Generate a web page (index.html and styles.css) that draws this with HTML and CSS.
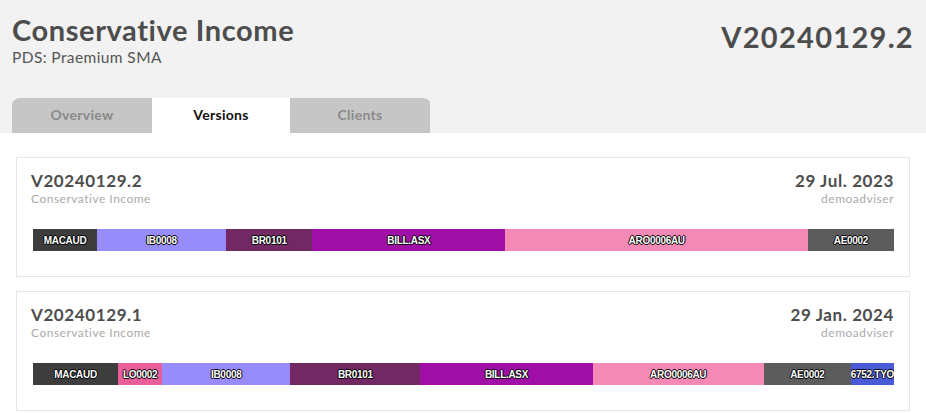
FILE: index.html
```html
<!DOCTYPE html>
<html lang="en">

<head>
    <meta charset="UTF-8">
    <meta name="viewport" content="width=device-width, initial-scale=1.0">
    <title>Conservative Income - Versions</title>
    <link rel="stylesheet" href="styles.css">
</head>

<body>
    <header class="page-head">
        <div class="head-row">
            <div>
                <h1 class="model-name">Conservative Income</h1>
                <p class="model-pds">PDS: Praemium SMA</p>
            </div>
            <div class="head-version">V20240129.2</div>
        </div>

        <nav class="tabs">
            <a class="tab">Overview</a>
            <a class="tab active">Versions</a>
            <a class="tab">Clients</a>
        </nav>
    </header>

    <main class="version-list">
        <div class="version-card">
            <div class="card-head">
                <div>
                    <div class="card-title">V20240129.2</div>
                    <div class="card-sub">Conservative Income</div>
                </div>
                <div class="card-right">
                    <div class="card-title">29 Jul. 2023</div>
                    <div class="card-sub">demoadviser</div>
                </div>
            </div>
            <div class="alloc-bar">
                <div class="seg c-macaud" style="width: 7.44%">MACAUD</div>
                <div class="seg c-ib" style="width: 15%">IB0008</div>
                <div class="seg c-br" style="width: 10%">BR0101</div>
                <div class="seg c-bill" style="width: 22.44%">BILL.ASX</div>
                <div class="seg c-aro" style="width: 35.12%">ARO0006AU</div>
                <div class="seg c-ae" style="width: 10%">AE0002</div>
            </div>
        </div>

        <div class="version-card">
            <div class="card-head">
                <div>
                    <div class="card-title">V20240129.1</div>
                    <div class="card-sub">Conservative Income</div>
                </div>
                <div class="card-right">
                    <div class="card-title">29 Jan. 2024</div>
                    <div class="card-sub">demoadviser</div>
                </div>
            </div>
            <div class="alloc-bar">
                <div class="seg c-macaud" style="width: 9.88%">MACAUD</div>
                <div class="seg c-lo" style="width: 5.12%">LO0002</div>
                <div class="seg c-ib" style="width: 14.88%">IB0008</div>
                <div class="seg c-br" style="width: 15.12%">BR0101</div>
                <div class="seg c-bill" style="width: 20%">BILL.ASX</div>
                <div class="seg c-aro" style="width: 19.88%">ARO0006AU</div>
                <div class="seg c-ae" style="width: 10.12%">AE0002</div>
                <div class="seg c-tyo" style="width: 5%">6752.TYO</div>
            </div>
        </div>
    </main>
</body>

</html>
```

FILE: styles.css
```css
body {
    margin: 0;
    font-family: "Lato", "Open Sans", sans-serif;
    background-color: #fff;
    color: #4d4d4d;
}

.page-head {
    background-color: #f2f2f2;
    padding: 14px 12px 0 12px;
}

.head-row {
    display: flex;
    justify-content: space-between;
    align-items: flex-start;
}

.model-name {
    margin: 0;
    font-size: 29px;
    line-height: 32px;
    font-weight: 700;
    letter-spacing: 0.6px;
    color: #4d4d4d;
}

.model-pds {
    margin: 2px 0 0 0;
    font-size: 15.5px;
    letter-spacing: 0.4px;
    color: #555;
}

.head-version {
    font-size: 29px;
    line-height: 32px;
    font-weight: 700;
    letter-spacing: 1.3px;
    margin-top: 7px;
    color: #4d4d4d;
}

.tabs {
    display: flex;
    margin-top: 32px;
    width: 419px;
    border-radius: 8px 8px 0 0;
    overflow: hidden;
}

.tab {
    width: 140px;
    height: 35px;
    line-height: 33px;
    text-align: center;
    font-size: 14px;
    font-weight: 700;
    letter-spacing: 0.3px;
    color: #8a8a8a;
    background-color: #c6c6c6;
}

.tab.active {
    width: 138px;
    background-color: #fff;
    color: #111;
}

.version-list {
    display: flex;
    flex-direction: column;
    gap: 14px;
    padding: 24px 16px 0 16px;
}

.version-card {
    border: 1px solid #e6e6e6;
    padding: 13px 15px 25px 14px;
}

.card-head {
    display: flex;
    justify-content: space-between;
}

.card-right {
    text-align: right;
}

.card-title {
    font-size: 17px;
    line-height: 20px;
    font-weight: 700;
    letter-spacing: 0.6px;
    color: #4d4d4d;
}

.card-sub {
    font-size: 12px;
    line-height: 15px;
    letter-spacing: 0.5px;
    color: #aaa;
}

.alloc-bar {
    display: flex;
    margin-top: 23px;
    margin-left: 2px;
    height: 22px;
}

.seg {
    display: flex;
    align-items: center;
    justify-content: center;
    overflow: hidden;
    white-space: nowrap;
    font-family: "Liberation Sans", Arial, sans-serif;
    font-size: 10px;
    font-weight: 700;
    letter-spacing: -0.3px;
    color: #fff;
    text-shadow: -1px 0 #000, 1px 0 #000, 0 -1px #000, 0 1px #000;
}

.c-macaud { background-color: #3d3d3d; }
.c-lo { background-color: #ea5d9b; }
.c-ib { background-color: #988bfc; }
.c-br { background-color: #722863; }
.c-bill { background-color: #a00ea8; }
.c-aro { background-color: #f589b6; }
.c-ae { background-color: #5c5c5c; }
.c-tyo { background-color: #4a5bd8; }
```
